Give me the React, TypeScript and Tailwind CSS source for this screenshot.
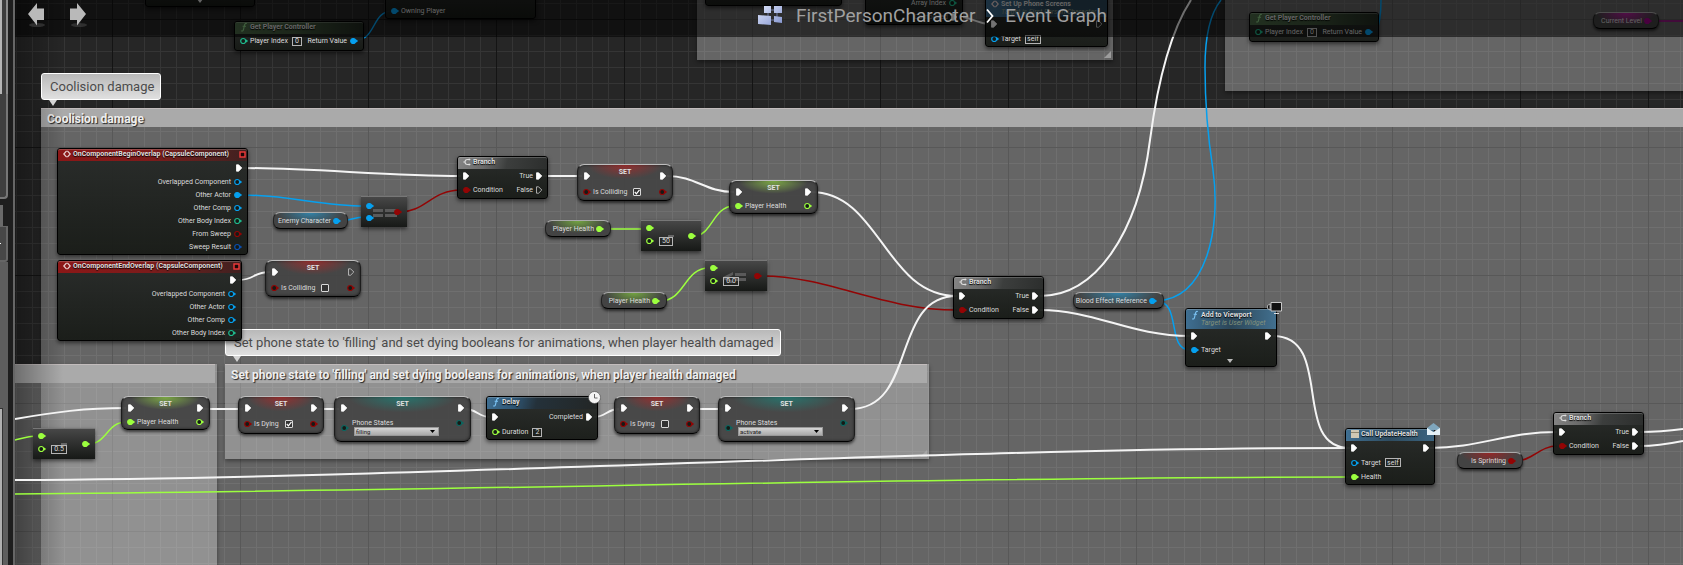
import React, { useState } from "react";
import type { ReactNode } from "react";

const BLUE = "#06a0ef";
const GREEN = "#9cff3f";
const RED = "#930505";
const TEAL = "#0d6660";
const MINT = "#1fb98c";
const NAVY = "#0a4fb0";
const MAGENTA = "#a3008c";

/* ---------- pins ---------- */

function ExecPin({ open = false }: { open?: boolean }) {
  return (
    <svg className="h-2 w-1.5 shrink-0 overflow-visible" viewBox="0 0 6 8" aria-hidden="true">
      <path
        d="M0.5 0.8H2.6L5.8 4L2.6 7.2H0.5Z"
        fill={open ? "none" : "#fff"}
        stroke={open ? "#ccc" : "#fff"}
        strokeWidth="0.8"
        strokeLinejoin="round"
      />
    </svg>
  );
}

function DataPin({ color, open = false }: { color: string; open?: boolean }) {
  return (
    <svg className="h-2 w-2 shrink-0 overflow-visible" viewBox="0 0 8 8" aria-hidden="true">
      <path d="M5.8 2.2L8.2 4L5.8 5.8Z" fill={color} />
      <circle cx="3.2" cy="4" r="2.5" fill={open ? "#151a16" : color} stroke={color} strokeWidth="1.2" />
    </svg>
  );
}

/* ---------- building blocks ---------- */

function Node({ className, children }: { className: string; children: ReactNode }) {
  return (
    <section
      className={`absolute flex flex-col rounded-[3px] border border-black bg-linear-to-b from-[#272a28]/95 to-[#171a16]/95 shadow-[0_2px_4px_rgba(0,0,0,0.55)] ${className}`}
    >
      {children}
    </section>
  );
}

function Header({ tone, icon, title, children }: { tone: string; icon: ReactNode; title: string; children?: ReactNode }) {
  return (
    <header className={`flex h-3 shrink-0 items-start gap-0.5 rounded-t-[2px] border-t border-white/20 px-[5px] ${tone}`}>
      {icon}
      <h3 className="text-[7px] leading-[8px] font-bold whitespace-nowrap text-[#dedede] [text-shadow:0_1px_1px_#000]">{title}</h3>
      {children}
    </header>
  );
}

function Row({ left, right, className = "h-3.5" }: { left?: ReactNode; right?: ReactNode; className?: string }) {
  return (
    <div className={`flex shrink-0 items-center justify-between px-[5px] ${className}`}>
      <div className="flex items-center gap-0.5">{left}</div>
      <div className="flex items-center gap-[3px]">{right}</div>
    </div>
  );
}

function Field({ id, value, label, className = "w-2.5" }: { id: string; value: string; label?: string; className?: string }) {
  return (
    <input
      id={id}
      aria-label={label}
      defaultValue={value}
      className={`ml-0.5 h-[9px] border border-[#b5b5b5] bg-transparent p-0 text-center text-[7px] leading-[7px] text-[#dcdcdc] outline-none ${className}`}
    />
  );
}

function Tick({ id, on }: { id: string; on: boolean }) {
  const [checked, setChecked] = useState(on);
  return (
    <span className="relative ml-1 flex size-2">
      <input
        id={id}
        type="checkbox"
        checked={checked}
        onChange={(e) => setChecked(e.target.checked)}
        className="size-2 appearance-none rounded-[1px] border border-[#d8d8d8] bg-[#333]"
      />
      {checked && (
        <svg className="pointer-events-none absolute inset-0 size-2" viewBox="0 0 8 8" aria-hidden="true">
          <path d="M1.8 4L3.4 5.8L6.5 1.8" fill="none" stroke="#fff" strokeWidth="1.2" />
        </svg>
      )}
    </span>
  );
}

const GLOW_RED = "bg-[radial-gradient(ellipse_40%_40%_at_50%_0%,rgba(190,35,35,0.65),transparent)]";
const GLOW_GREEN = "bg-[radial-gradient(ellipse_40%_40%_at_50%_0%,rgba(150,215,70,0.7),transparent)]";
const GLOW_TEAL = "bg-[radial-gradient(ellipse_40%_35%_at_50%_0%,rgba(25,135,125,0.7),transparent)]";
const GLOW_BLUE = "bg-[radial-gradient(ellipse_46%_80%_at_50%_0%,rgba(45,150,200,0.75),transparent)]";
const PILL_GREEN = "bg-[radial-gradient(ellipse_46%_80%_at_50%_0%,rgba(135,205,65,0.7),transparent)]";
const PILL_RED = "bg-[radial-gradient(ellipse_46%_80%_at_50%_0%,rgba(190,25,25,0.65),transparent)]";
const PILL_MAGENTA = "bg-[radial-gradient(ellipse_46%_80%_at_50%_0%,rgba(210,20,180,0.8),transparent)]";

function SetNode({
  className,
  glow,
  outOpen = false,
  children,
}: {
  className: string;
  glow: string;
  outOpen?: boolean;
  children: ReactNode;
}) {
  return (
    <section
      className={`absolute flex flex-col rounded-[7px] border border-t-[#bdbdbd] border-x-[#1c1c1c] border-b-black bg-[#454545]/95 shadow-[0_2px_3px_rgba(0,0,0,0.6),inset_0_0_3px_rgba(0,0,0,0.6)] ${className}`}
    >
      <div className={`flex grow flex-col rounded-[6px] pt-1 ${glow}`}>
        <div className="flex h-3.5 items-center justify-between px-1.5">
          <ExecPin />
          <h3 className="-mt-2 text-[7px] leading-[8px] font-bold text-[#e0e0e0]">SET</h3>
          <ExecPin open={outOpen} />
        </div>
        {children}
      </div>
    </section>
  );
}

function SetBool({ className, id, label, on, outOpen }: { className: string; id: string; label: string; on: boolean; outOpen?: boolean }) {
  return (
    <SetNode className={className} glow={GLOW_RED} outOpen={outOpen}>
      <Row
        className="h-[17px]"
        left={
          <>
            <DataPin color={RED} open />
            <label htmlFor={id}>{label}</label>
            <Tick id={id} on={on} />
          </>
        }
        right={<DataPin color={RED} open />}
      />
    </SetNode>
  );
}

function SetHealth({ className }: { className: string }) {
  return (
    <SetNode className={className} glow={GLOW_GREEN}>
      <Row
        left={
          <>
            <DataPin color={GREEN} />
            <span>Player Health</span>
          </>
        }
        right={<DataPin color={GREEN} open />}
      />
    </SetNode>
  );
}

function SetPhone({ className, id, value }: { className: string; id: string; value: string }) {
  return (
    <SetNode className={className} glow={GLOW_TEAL}>
      <div className="flex px-1.5">
        <div className="flex h-[26px] items-center">
          <DataPin color={TEAL} open />
        </div>
        <div className="ml-[3px] flex flex-col">
          <label htmlFor={id} className="mt-1">
            Phone States
          </label>
          <div className="relative ml-0.5 flex w-[85px] items-center">
            <select
              id={id}
              defaultValue={value}
              className="h-[9px] w-full appearance-none border border-[#999] bg-linear-to-b from-[#d4d4d4] to-[#aaa] pl-px text-[6px] leading-[7px] text-[#222]"
            >
              <option>filling</option>
              <option>activate</option>
            </select>
            <svg className="pointer-events-none absolute right-1 h-[3px] w-[5px]" viewBox="0 0 5 3" aria-hidden="true">
              <path d="M0 0H5L2.5 3Z" fill="#000" />
            </svg>
          </div>
        </div>
        <div className="mt-1 ml-auto h-2">
          <DataPin color={TEAL} open />
        </div>
      </div>
    </SetNode>
  );
}

function Pill({ className, glow, label, color }: { className: string; glow: string; label: string; color: string }) {
  return (
    <div
      className={`absolute h-[17px] rounded-[7px] border border-t-[#aaa] border-x-[#222] border-b-black bg-[#434343] shadow-[0_2px_3px_rgba(0,0,0,0.6)] ${className}`}
    >
      <div className={`flex h-full items-center justify-end gap-0.5 rounded-[6px] pr-1.5 ${glow}`}>
        <span>{label}</span>
        <DataPin color={color} />
      </div>
    </div>
  );
}

function BranchIcon() {
  return (
    <svg className="h-2 w-2 shrink-0" viewBox="0 0 8 8" aria-hidden="true">
      <path d="M7 1.5H4.5C2.8 1.5 2 2.5 2 4S2.8 6.5 4.5 6.5H7M0.3 4H2.2" fill="none" stroke="#ddd" strokeWidth="1.1" />
      <path d="M5.8 0.2L7.8 1.5L5.8 2.8ZM5.8 5.2L7.8 6.5L5.8 7.8Z" fill="#ddd" />
    </svg>
  );
}

function FuncIcon({ color }: { color: string }) {
  return (
    <svg className="h-2 w-2 shrink-0 overflow-visible" viewBox="0 0 8 8" aria-hidden="true">
      <path d="M6.8 0.6C5.2 0 4.7 1 4.4 2.6L3.6 6.2C3.3 7.8 2.6 8.4 1.2 7.8M2.6 3.2H6" fill="none" stroke={color} strokeWidth="1.1" />
    </svg>
  );
}

function EventIcon() {
  return (
    <svg className="h-2 w-2 shrink-0" viewBox="0 0 8 8" aria-hidden="true">
      <path d="M3.6 0.8L0.8 4L3.6 7.2M4.4 0.8L7.2 4L4.4 7.2" fill="none" stroke="#e8d0d0" strokeWidth="1.2" />
    </svg>
  );
}

function Branch({ className, falseOpen = false }: { className: string; falseOpen?: boolean }) {
  return (
    <Node className={`h-[43px] w-[91px] ${className}`}>
      <Header
        tone="bg-[linear-gradient(105deg,#858585_0%,#6a6a6a_30%,#3c3e3d_55%,#2c2e2d_100%)]"
        icon={<BranchIcon />}
        title="Branch"
      />
      <Row
        left={<ExecPin />}
        right={
          <>
            <span>True</span>
            <ExecPin />
          </>
        }
      />
      <Row
        left={
          <>
            <DataPin color={RED} />
            <span>Condition</span>
          </>
        }
        right={
          <>
            <span>False</span>
            <ExecPin open={falseOpen} />
          </>
        }
      />
    </Node>
  );
}

function EventNode({ className, title, outputs }: { className: string; title: string; outputs: [string, string, boolean][] }) {
  return (
    <Node className={className}>
      <Header tone="bg-linear-to-r from-[#8c1717] via-[#7c1b1b] to-[#3f2020]" icon={<EventIcon />} title={title}>
        <svg className="mt-px ml-auto -mr-1 size-[7px] shrink-0" viewBox="0 0 7 7" aria-hidden="true">
          <rect x="1" y="1" width="5" height="5" fill="#1c0808" stroke="#f23b3b" strokeWidth="1.4" />
        </svg>
      </Header>
      <Row right={<ExecPin />} />
      {outputs.map(([label, color, connected]) => (
        <Row
          key={label}
          className="h-[13px]"
          right={
            <>
              <span>{label}</span>
              <DataPin color={color} open={!connected} />
            </>
          }
        />
      ))}
    </Node>
  );
}

function MathNode({
  className,
  id,
  value,
  symbol,
  out,
  fieldClass,
}: {
  className: string;
  id: string;
  value: string;
  symbol: ReactNode;
  out: string;
  fieldClass: string;
}) {
  return (
    <section
      className={`absolute flex h-[31px] items-center justify-between border-t border-[#777] bg-linear-to-b from-[#474747] to-[#171917] px-[5px] shadow-[0_2px_4px_rgba(0,0,0,0.55)] ${className}`}
    >
      {symbol}
      <div className="relative -mt-[3px] flex flex-col gap-[5px]">
        <DataPin color={GREEN} />
        <div className="flex h-2 items-center gap-[3px]">
          <DataPin color={GREEN} open />
          <Field id={id} label="Second operand" value={value} className={fieldClass} />
        </div>
      </div>
      <DataPin color={out} />
    </section>
  );
}

function PlayerController({ className, id }: { className: string; id: string }) {
  return (
    <Node className={`h-[30px] w-[130px] ${className}`}>
      <Header
        tone="bg-linear-to-r from-[#4d6b49] via-[#3d5339] to-[#222a21]"
        icon={<FuncIcon color="#8fd48a" />}
        title="Get Player Controller"
      />
      <Row
        left={
          <>
            <DataPin color={MINT} open />
            <label htmlFor={id}>Player Index</label>
            <Field id={id} value="0" />
          </>
        }
        right={
          <>
            <span>Return Value</span>
            <DataPin color={BLUE} />
          </>
        }
      />
    </Node>
  );
}

/* ---------- comments ---------- */

function Bubble({ className, children }: { className: string; children: ReactNode }) {
  return (
    <div className={`absolute ${className}`}>
      <p className="rounded-[3px] border border-white bg-linear-to-b from-[#b9b9b9] to-[#e0e0e0] pr-1.5 pl-2 text-[13px] leading-[25px] whitespace-nowrap text-[#4b4b4b]">
        {children}
      </p>
      <svg className="ml-2 h-1.5 w-2" viewBox="0 0 8 6" aria-hidden="true">
        <path d="M0 0H8L4 6Z" fill="#d4d4d4" />
      </svg>
    </div>
  );
}

function Comment({ className, title, children }: { className: string; title?: string; children?: ReactNode }) {
  return (
    <section className={`absolute bg-white/29 shadow-[0_2px_4px_rgba(0,0,0,0.4)] ${className}`}>
      {title !== undefined && (
        <h2 className="mr-0.5 h-[19px] border-t border-[#c2bcbc] bg-[#aaa] pl-1.5 text-[12px] leading-[20px] font-bold whitespace-nowrap text-[#efefef] [text-shadow:1px_1px_1px_#222]">
          {title}
        </h2>
      )}
      {children}
    </section>
  );
}

function ResizeGrip() {
  return (
    <svg className="absolute right-0.5 bottom-0.5 size-[7px]" viewBox="0 0 7 7" aria-hidden="true">
      <path d="M7 0V7H0Z" fill="#aaa" opacity="0.8" />
    </svg>
  );
}

/* ---------- wires ---------- */

const EXEC_WIRES = [
  "M241 168C310 168 390 176 461 176",
  "M238 280C256 280 252 272 270 272",
  "M542 176H582",
  "M667 176C696 176 705 192 734 192",
  "M811 192C880 192 885 296 957 296",
  "M850 409C918 409 890 296 957 296",
  "M1040 296C1095 296 1138 235 1150 140C1156 95 1168 35 1191 0",
  "M1040 310C1095 310 1130 336 1190 336",
  "M1273 336C1335 336 1290 448 1350 448",
  "M15 480C440 478 930 448 1350 448",
  "M1430 448C1480 448 1505 432 1557 432",
  "M1640 432C1655 432 1668 431 1683 429",
  "M1640 446C1655 446 1668 444 1683 441",
  "M15 419C55 412 85 408 126 408",
  "M203 409H243",
  "M317 409H339",
  "M465 409C477 409 478 417 490 417",
  "M594 417C606 417 607 409 619 409",
  "M695 409H723",
  "M957 16C968 16 978 24 990 24",
];

const DATA_WIRES: [string, string][] = [
  [BLUE, "M241 195C290 195 320 206 365 206"],
  [BLUE, "M340 221C350 221 354 217 365 217"],
  [RED, "M400 212C425 212 432 190 461 190"],
  [GREEN, "M604 229H645"],
  [GREEN, "M694 236C712 236 713 206 734 206"],
  [GREEN, "M660 301C685 301 684 268 709 268"],
  [RED, "M761 276C830 276 880 310 957 310"],
  [BLUE, "M1156 301C1207 299 1221 228 1213 170C1208 138 1205 100 1205 67C1205 40 1209 15 1221 0"],
  [BLUE, "M1156 301C1182 301 1166 350 1190 350"],
  [RED, "M1516 461C1532 461 1540 446 1557 446"],
  [GREEN, "M15 494C440 491 930 477 1350 477"],
  [GREEN, "M15 440C23 438 29 436 37 436"],
  [GREEN, "M88 444C107 444 107 422 126 422"],
  [BLUE, "M356 40C376 40 372 11 392 11"],
  [BLUE, "M1376 32C1380 24 1381 12 1381 0"],
  [MAGENTA, "M1651 21H1800"],
];

function Wires() {
  return (
    <svg className="pointer-events-none absolute inset-0 h-full w-full overflow-visible" fill="none" aria-hidden="true">
      {DATA_WIRES.map(([color, d]) => (
        <path key={d} d={d} stroke={color} strokeWidth="1.5" />
      ))}
      {EXEC_WIRES.map((d) => (
        <path key={d} d={d} stroke="#f4f4f4" strokeWidth="2" />
      ))}
    </svg>
  );
}

/* ---------- page ---------- */

function Rail() {
  return (
    <aside className="relative z-10 flex w-[15px] shrink-0 flex-col border-r-2 border-[#666] bg-[#1e1e1e]">
      <div className="h-[94px] w-2 border-r-2 border-[#8a8a8a] bg-[#3c3c3c]">
        <div className="h-full w-0.5 bg-[#b5b5b5]" />
      </div>
      <div className="h-[105px] w-2 rounded-br-[4px] border-r-2 border-b-2 border-[#777] bg-[#3f3f3f]" />
      <div className="mt-1.5 h-[21px] w-[3px] bg-[#6a6a6a]" />
      <div className="flex h-9 w-2 items-center rounded-br-[3px] border-t border-r-2 border-b-2 border-[#666] bg-[#474747]">
        <span className="size-px bg-white" />
      </div>
      <div className="h-[146px] w-2 bg-[#5e5e5e]" />
      <div className="flex w-2 grow bg-[#5e5e5e]">
        <div className="w-[3px] border-t border-r border-[#333] bg-[#b0b0b0]" />
      </div>
    </aside>
  );
}

function NavArrow({ label, d }: { label: string; d: string }) {
  return (
    <button type="button" aria-label={label} className="flex h-7 w-[18px] items-center">
      <svg className="h-7 w-[18px]" viewBox="0 0 18 28" aria-hidden="true">
        <ellipse cx="10" cy="25" rx="8" ry="2" fill="#444" opacity="0.6" />
        <path d={d} fill="#b9b9b9" />
      </svg>
    </button>
  );
}

function TopBar() {
  return (
    <div className="absolute inset-x-0 top-0 flex h-[37px] items-start bg-black/55 pl-3">
      <nav aria-label="History" className="flex w-[731px] shrink-0 gap-6">
        <NavArrow label="Back" d="M1 14L10 3V8.5H17V20H10V25.5Z" />
        <NavArrow label="Forward" d="M17 14L8 3V8.5H1V20H8V25.5Z" />
      </nav>
      <nav aria-label="Breadcrumb" className="flex h-8 items-center text-[19px] leading-8 whitespace-nowrap text-[#a0a0a0]">
        <svg className="mr-3.5 h-5 w-6 shrink-0" viewBox="0 0 24 20" aria-hidden="true">
          <defs>
            <linearGradient id="box" x1="0" y1="0" x2="1" y2="1">
              <stop offset="0" stopColor="#dfe6fb" />
              <stop offset="1" stopColor="#8495cf" />
            </linearGradient>
          </defs>
          <path d="M13 4H17M19 6V13M12 14H17M10 6V10" stroke="#7f8cc0" strokeWidth="0.8" />
          <path d="M6 0H13V7H6ZM16 0H24V7H16ZM16 10L24 11V17L16 16ZM0 9L13 10V19L0 18Z" fill="url(#box)" />
        </svg>
        <a href="#class">FirstPersonCharacter</a>
        <svg className="mx-[11px] h-4 w-2 shrink-0" viewBox="0 0 8 16" aria-hidden="true">
          <path d="M1 1.5L6.5 8L1 14.5" fill="none" stroke="#fff" strokeWidth="1.8" />
        </svg>
        <a href="#graph">Event Graph</a>
      </nav>
    </div>
  );
}

export default function App() {
  return (
    <div className="flex h-screen w-full overflow-hidden bg-[#262626] font-[Roboto,'Liberation_Sans',sans-serif] text-[7px] leading-[8px] text-[#dcdcdc]">
      <Rail />
      <main className="relative min-w-0 grow overflow-hidden">
        <div className="absolute inset-y-0 right-0 -left-[15px] whitespace-nowrap">
          <svg className="absolute inset-0 h-full w-full" aria-hidden="true">
            <defs>
              <pattern id="minor" width="16" height="16" patternUnits="userSpaceOnUse" y="3">
                <path d="M0 0H16V1H1V16H0Z" fill="#353535" />
              </pattern>
              <pattern id="major" width="128" height="128" patternUnits="userSpaceOnUse" x="112" y="19">
                <path d="M0 0H128V1H1V128H0Z" fill="#141414" />
              </pattern>
            </defs>
            <rect width="100%" height="100%" fill="url(#minor)" />
            <rect width="100%" height="100%" fill="url(#major)" />
          </svg>

          <Comment className="top-[108px] -right-1 -bottom-2 left-[41px]" title="Coolision damage" />
          <Comment className="-top-4 left-[697px] h-[76px] w-[416px]">
            <ResizeGrip />
          </Comment>
          <Comment className="-top-4 -right-4 left-[1225px] h-[107px]" />
          <Comment className="top-[364px] -bottom-2 left-0 w-[217px]" title="" />
          <Comment
            className="top-[364px] left-[225px] h-[95px] w-[704px]"
            title="Set phone state to 'filling' and set dying booleans for animations, when player health damaged"
          >
            <ResizeGrip />
          </Comment>
          <div className="absolute inset-y-0 left-[15px] w-12 bg-linear-to-r from-black/35 to-transparent" />

          <Bubble className="top-[73px] left-[41px]">Coolision damage</Bubble>
          <Bubble className="top-[329px] left-[225px]">
            Set phone state to 'filling' and set dying booleans for animations, when player health damaged
          </Bubble>

          <Wires />

          <EventNode
            className="top-[148px] left-[57px] h-[107px] w-[191px]"
            title="OnComponentBeginOverlap (CapsuleComponent)"
            outputs={[
              ["Overlapped Component", BLUE, false],
              ["Other Actor", BLUE, true],
              ["Other Comp", BLUE, false],
              ["Other Body Index", MINT, false],
              ["From Sweep", RED, false],
              ["Sweep Result", NAVY, false],
            ]}
          />
          <EventNode
            className="top-[260px] left-[57px] h-[81px] w-[185px]"
            title="OnComponentEndOverlap (CapsuleComponent)"
            outputs={[
              ["Overlapped Component", BLUE, false],
              ["Other Actor", BLUE, false],
              ["Other Comp", BLUE, false],
              ["Other Body Index", MINT, false],
            ]}
          />

          <Pill className="top-[212px] left-[273px] w-[75px]" glow={GLOW_BLUE} label="Enemy Character" color={BLUE} />
          <section className="absolute top-[196px] left-[361px] flex h-[31px] w-[46px] items-center justify-between border-t border-[#777] bg-linear-to-b from-[#474747] to-[#171917] px-[5px] shadow-[0_2px_4px_rgba(0,0,0,0.55)]">
            <svg className="absolute top-3 left-3 h-2 w-[25px]" viewBox="0 0 25 8" aria-label="equals">
              <path d="M0 0H10V3H0ZM12 0H24V3H12ZM0 5H10V8H0ZM12 5H24V8H12Z" fill="#5a5a5a" />
            </svg>
            <div className="relative flex flex-col gap-1">
              <DataPin color={BLUE} />
              <DataPin color={BLUE} />
            </div>
            <div className="relative">
              <DataPin color={RED} />
            </div>
          </section>

          <Branch className="top-[156px] left-[457px]" falseOpen />
          <SetBool className="top-[164px] left-[577px] h-[37px] w-24" id="colliding-on" label="Is Colliding" on />
          <SetBool className="top-[260px] left-[265px] h-[37px] w-24" id="colliding-off" label="Is Colliding" on={false} outOpen />
          <SetHealth className="top-[180px] left-[729px] h-[34px] w-[89px]" />
          <Pill className="top-[220px] left-[545px] w-[66px]" glow={PILL_GREEN} label="Player Health" color={GREEN} />
          <MathNode
            className="top-[220px] left-[641px] w-[60px]"
            id="minus-50"
            value="50"
            out={GREEN}
            fieldClass="w-3.5"
            symbol={<span className="absolute top-[14px] left-[27px] h-0.5 w-1.5 bg-[#666]" />}
          />
          <MathNode
            className="top-[260px] left-[705px] w-[62px]"
            id="less-equal"
            value="0.0"
            out={RED}
            fieldClass="w-4"
            symbol={
              <svg className="absolute top-[11px] left-[18px] h-[11px] w-6" viewBox="0 0 24 11" aria-label="less or equal">
                <path d="M0 5L10 0V3L4 6L10 9V11L0 7ZM12 1H23V4H12ZM12 6H23V9H12Z" fill="#5a5a5a" />
              </svg>
            }
          />
          <Pill className="top-[292px] left-[601px] w-[66px]" glow={PILL_GREEN} label="Player Health" color={GREEN} />
          <Branch className="top-[276px] left-[953px]" />
          <Pill className="top-[292px] left-[1073px] w-[91px]" glow={GLOW_BLUE} label="Blood Effect Reference" color={BLUE} />

          <Node className="top-[308px] left-[1185px] h-[59px] w-[92px]">
            <header className="flex h-5 shrink-0 items-start gap-0.5 rounded-t-[2px] border-t border-white/20 bg-linear-to-r from-[#3f6f92] via-[#2b4658] to-[#42708f] px-[5px] pt-px">
              <FuncIcon color="#7cc4f5" />
              <div>
                <h3 className="font-bold text-[#dedede] [text-shadow:0_1px_1px_#000]">Add to Viewport</h3>
                <p className="text-[#83927c] italic">Target is User Widget</p>
              </div>
            </header>
            <Row left={<ExecPin />} right={<ExecPin />} />
            <Row
              left={
                <>
                  <DataPin color={BLUE} />
                  <span>Target</span>
                </>
              }
            />
            <button type="button" aria-label="Show more pins" className="mx-auto flex size-2 items-center">
              <svg className="h-1 w-1.5" viewBox="0 0 6 4" aria-hidden="true">
                <path d="M0 0H6L3 4Z" fill="#bbb" />
              </svg>
            </button>
            <svg className="absolute -top-[7px] -right-1.5 h-3 w-[15px]" viewBox="0 0 15 12" aria-hidden="true">
              <path d="M4 0.5H14.5V9H4Z" fill="#111" stroke="#c8c8c8" />
              <path d="M7 11H12V12H7Z" fill="#ddd" />
              <path d="M0.5 3.5L3 2V8L0.5 6.5Z" fill="#111" stroke="#ddd" strokeWidth="0.7" />
            </svg>
          </Node>

          <Node className="top-[428px] left-[1345px] h-[57px] w-[90px]">
            <Header
              tone="bg-linear-to-r from-[#3f6f92] via-[#2e4c60] to-[#3b6480]"
              icon={
                <svg className="h-2 w-2 shrink-0" viewBox="0 0 8 8" aria-hidden="true">
                  <path d="M0 0H8V8H0Z" fill="#cfc8b4" />
                  <path d="M0 2H8V3H0Z" fill="#8d866f" />
                </svg>
              }
              title="Call UpdateHealth"
            />
            <Row left={<ExecPin />} right={<ExecPin />} />
            <Row
              className="h-[15px]"
              left={
                <>
                  <DataPin color={BLUE} open />
                  <label htmlFor="update-target">Target</label>
                  <Field id="update-target" value="self" className="w-4" />
                </>
              }
            />
            <Row
              left={
                <>
                  <DataPin color={GREEN} />
                  <span>Health</span>
                </>
              }
            />
            <svg className="absolute -top-1.5 -right-1.5 h-3 w-[13px]" viewBox="0 0 13 12" aria-hidden="true">
              <path d="M0 5L6.5 0L13 5V7H0Z" fill="#7fa6bd" />
              <path d="M0 5L6.5 9L13 5V12H0Z" fill="#e4f1f8" />
            </svg>
          </Node>

          <Pill className="top-[452px] left-[1457px] w-[66px]" glow={PILL_RED} label="Is Sprinting" color={RED} />
          <Branch className="top-[412px] left-[1553px]" />

          <SetHealth className="top-[396px] left-[121px] h-[34px] w-[89px]" />
          <MathNode
            className="top-[428px] left-[33px] w-[62px]"
            id="minus-half"
            value="0.5"
            out={GREEN}
            fieldClass="w-4"
            symbol={<span className="absolute top-[14px] left-[28px] h-0.5 w-1.5 bg-[#666]" />}
          />
          <SetBool className="top-[396px] left-[238px] h-[38px] w-[86px]" id="dying-on" label="Is Dying" on />
          <SetPhone className="top-[396px] left-[334px] h-[46px] w-[137px]" id="phone-filling" value="filling" />
          <Node className="top-[396px] left-[486px] h-11 w-28 gap-px">
            <Header
              tone="bg-[linear-gradient(105deg,#3f6f92_0%,#2f5674_25%,#24313a_45%,#232625_100%)]"
              icon={<FuncIcon color="#7cc4f5" />}
              title="Delay"
            />
            <Row
              left={<ExecPin />}
              right={
                <>
                  <span>Completed</span>
                  <ExecPin />
                </>
              }
            />
            <Row
              left={
                <>
                  <DataPin color={GREEN} open />
                  <label htmlFor="delay-duration">Duration</label>
                  <Field id="delay-duration" value="2" />
                </>
              }
            />
            <svg className="absolute -top-1.5 -right-1 size-[13px]" viewBox="0 0 13 13" aria-hidden="true">
              <circle cx="6.5" cy="6.5" r="6" fill="#f5f5f5" stroke="#444" strokeWidth="0.6" />
              <path d="M6.5 3V7H9.5" fill="none" stroke="#666" strokeWidth="1" />
            </svg>
          </Node>
          <SetBool className="top-[396px] left-[614px] h-[38px] w-[86px]" id="dying-off" label="Is Dying" on={false} />
          <SetPhone className="top-[396px] left-[718px] h-[46px] w-[137px]" id="phone-activate" value="activate" />

          <PlayerController className="top-[21px] left-[234px]" id="player-index-a" />
          <PlayerController className="top-[12px] left-[1249px]" id="player-index-b" />
          <Pill className="top-[12px] left-[1593px] w-[66px]" glow={PILL_MAGENTA} label="Current Level" color={MAGENTA} />

          <Node className="-top-4 left-[145px] h-[23px] w-[110px] items-center justify-end">
            <svg className="mb-[3px] h-1 w-1.5" viewBox="0 0 6 4" aria-hidden="true">
              <path d="M0 0H6L3 4Z" fill="#ddd" />
            </svg>
          </Node>
          <Node className="-top-4 left-[385px] h-[35px] w-[151px] justify-end">
            <Row
              left={
                <>
                  <DataPin color={BLUE} />
                  <span>Owning Player</span>
                </>
              }
            />
          </Node>
          <Node className="-top-4 left-[705px] h-[22px] w-[137px]">
            <span />
          </Node>
          <Node className="-top-4 left-[865px] h-[41px] w-[98px] justify-end">
            <Row
              right={
                <>
                  <span>Array Index</span>
                  <DataPin color={MINT} open />
                </>
              }
            />
            <Row
              right={
                <>
                  <span className="opacity-50">Completed</span>
                  <ExecPin />
                </>
              }
            />
          </Node>
          <Node className="-top-1 left-[985px] h-[51px] w-[123px]">
            <header className="flex h-5 shrink-0 items-start gap-0.5 rounded-t-[2px] bg-linear-to-r from-[#3f6f92] via-[#2b4658] to-[#2b4658] px-[5px] pt-[3px]">
              <EventIcon />
              <div>
                <h3 className="font-bold">Set Up Phone Screens</h3>
                <p className="text-[#83927c] italic">Target is First Person Character</p>
              </div>
            </header>
            <Row left={<ExecPin />} right={<ExecPin open />} />
            <Row
              className="h-4"
              left={
                <>
                  <DataPin color={BLUE} open />
                  <label htmlFor="screens-target">Target</label>
                  <Field id="screens-target" value="self" className="w-4" />
                </>
              }
            />
          </Node>
        </div>
        <TopBar />
      </main>
    </div>
  );
}
